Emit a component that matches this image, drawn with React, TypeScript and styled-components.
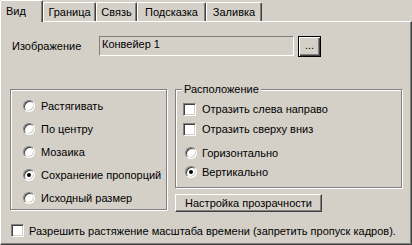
import React from "react";
import styled, { createGlobalStyle } from "styled-components";

const Global = createGlobalStyle`
  html, body { margin: 0; padding: 0; background: #d4d0c8; }
  body { font-family: "Liberation Sans", Arial, sans-serif; font-size: 11px; color: #000; }
  * { box-sizing: border-box; }
`;

const Dialog = styled.div`
  width: 412px;
  height: 245px;
  background: #d4d0c8;
  display: flex;
  flex-direction: column;
  overflow: hidden;
`;

const TabStrip = styled.div`
  display: flex;
  align-items: flex-end;
  height: 21px;
`;

const Tab = styled.div<{ $w: number; $active?: boolean; $pl?: number }>`
  width: ${(p) => p.$w}px;
  height: ${(p) => (p.$active ? 22 : 19)}px;
  margin-bottom: ${(p) => (p.$active ? -1 : 0)}px;
  position: relative;
  z-index: ${(p) => (p.$active ? 2 : 0)};
  background: #d4d0c8;
  border-left: 1px solid #fff;
  border-top: 1px solid #fff;
  border-right: 1px solid #404040;
  box-shadow: inset -1px 0 0 #808080;
  border-top-left-radius: 2px;
  border-top-right-radius: 2px;
  display: flex;
  align-items: ${(p) => (p.$active ? "flex-start" : "center")};
  justify-content: ${(p) => (p.$pl !== undefined ? "flex-start" : "center")};
  padding-left: ${(p) => p.$pl ?? 0}px;
  padding-top: ${(p) => (p.$active ? 4 : 0)}px;
  white-space: nowrap;
`;

const Panel = styled.div`
  flex: 1;
  position: relative;
  z-index: 1;
  border-top: 1px solid #fff;
  border-left: 1px solid #fff;
  border-right: 1px solid #404040;
  border-bottom: 1px solid #404040;
  box-shadow: inset -1px -1px 0 #808080;
  display: flex;
  flex-direction: column;
`;

const ImageRow = styled.div`
  display: flex;
  align-items: center;
  margin-top: 14px;
  padding-left: 11px;
  height: 21px;
`;

const Label = styled.div`
  width: 87px;
  white-space: nowrap;
  padding-bottom: 2px;
`;

const ReadOnlyField = styled.div`
  width: 195px;
  height: 20px;
  align-self: flex-start;
  border-top: 1px solid #808080;
  border-left: 1px solid #808080;
  border-right: 1px solid #fff;
  border-bottom: 1px solid #fff;
  padding: 1px 0 0 2px;
  white-space: nowrap;
`;

const BrowseButton = styled.div`
  width: 23px;
  height: 21px;
  margin-left: 4px;
  border: 1px solid #000;
  box-shadow: inset 1px 1px 0 #fff, inset -1px -1px 0 #404040, inset -2px -2px 0 #808080;
  display: flex;
  align-items: center;
  justify-content: center;
  padding-bottom: 3px;
  font-size: 11px;
  letter-spacing: 0px;
`;

const MainRow = styled.div`
  display: flex;
  align-items: flex-start;
  gap: 7px;
  margin-top: 32px;
  padding-left: 9px;
`;

const GroupBox = styled.div<{ $w: number; $h: number; $pt: number; $pl: number }>`
  position: relative;
  width: ${(p) => p.$w - 1}px;
  height: ${(p) => p.$h - 1}px;
  margin-right: 1px;
  border: 1px solid #808080;
  box-shadow: inset 1px 1px 0 #fff, 1px 1px 0 #fff;
  padding: ${(p) => p.$pt}px 0 0 ${(p) => p.$pl}px;
  display: flex;
  flex-direction: column;
`;

const GroupTitle = styled.div`
  position: absolute;
  top: -8px;
  left: 6px;
  padding: 0 2px 0 2px;
  background: #d4d0c8;
  white-space: nowrap;
  line-height: 14px;
`;

const RightColumn = styled.div`
  display: flex;
  flex-direction: column;
  align-items: flex-start;
`;

const Option = styled.div<{ $h: number; $gap: number; $ml?: number }>`
  display: flex;
  align-items: center;
  height: ${(p) => p.$h}px;
  gap: ${(p) => p.$gap}px;
  margin-left: ${(p) => p.$ml ?? 0}px;
  white-space: nowrap;
`;

const RadioCircle = styled.span<{ $on?: boolean }>`
  width: 12px;
  height: 12px;
  flex: none;
  border-radius: 50%;
  background: #fff;
  border: 1px solid;
  border-color: #808080 #fff #fff #808080;
  box-shadow: inset 1px 1px 0 #404040, inset -1px -1px 0 #d4d0c8;
  display: flex;
  align-items: center;
  justify-content: center;
  &::after {
    content: "";
    display: ${(p) => (p.$on ? "block" : "none")};
    width: 4px;
    height: 4px;
    border-radius: 50%;
    background: #000;
  }
`;

const CheckSquare = styled.span`
  width: 13px;
  height: 13px;
  flex: none;
  background: #fff;
  border: 1px solid;
  border-color: #808080 #fff #fff #808080;
  box-shadow: inset 1px 1px 0 #404040, inset -1px -1px 0 #d4d0c8;
`;

const PushButton = styled.div`
  width: 147px;
  height: 18px;
  margin-top: 6px;
  border: 1px solid;
  border-color: #fff #404040 #404040 #fff;
  box-shadow: inset -1px -1px 0 #808080;
  display: flex;
  align-items: center;
  justify-content: center;
  white-space: nowrap;
  padding-bottom: 1px;
`;

const BottomOption = styled(Option)`
  margin-top: 12px;
  padding-left: 10px;
`;

const Radio = ({ label, on, h, gap, ml }: { label: string; on?: boolean; h: number; gap: number; ml?: number }) => (
  <Option $h={h} $gap={gap} $ml={ml}>
    <RadioCircle $on={on} />
    <span>{label}</span>
  </Option>
);

const Check = ({ label, h }: { label: string; h: number }) => (
  <Option $h={h} $gap={6}>
    <CheckSquare />
    <span>{label}</span>
  </Option>
);

export default function App() {
  const fitModes = ["Растягивать", "По центру", "Мозаика", "Сохранение пропорций", "Исходный размер"];
  return (
    <>
      <Global />
      <Dialog>
        <TabStrip>
          <Tab $w={43} $active $pl={5}>Вид</Tab>
          <Tab $w={53}>Граница</Tab>
          <Tab $w={41}>Связь</Tab>
          <Tab $w={69}>Подсказка</Tab>
          <Tab $w={56}>Заливка</Tab>
        </TabStrip>
        <Panel>
          <ImageRow>
            <Label>Изображение</Label>
            <ReadOnlyField>Конвейер 1</ReadOnlyField>
            <BrowseButton>...</BrowseButton>
          </ImageRow>
          <MainRow>
            <GroupBox $w={158} $h={122} $pt={5} $pl={12}>
              {fitModes.map((m) => (
                <Radio key={m} label={m} on={m === "Сохранение пропорций"} h={23} gap={6} />
              ))}
            </GroupBox>
            <RightColumn>
              <GroupBox $w={228} $h={100} $pt={9} $pl={7}>
                <GroupTitle>Расположение</GroupTitle>
                <Check label="Отразить слева направо" h={20} />
                <Check label="Отразить сверху вниз" h={20} />
                <Option $h={4} $gap={0} />
                <Radio label="Горизонтально" h={19} gap={5} ml={2} />
                <Radio label="Вертикально" on h={19} gap={5} ml={2} />
              </GroupBox>
              <PushButton>Настройка прозрачности</PushButton>
            </RightColumn>
          </MainRow>
          <BottomOption $h={13} $gap={5}>
            <CheckSquare />
            <span>Разрешить растяжение масштаба времени (запретить пропуск кадров).</span>
          </BottomOption>
        </Panel>
      </Dialog>
    </>
  );
}
